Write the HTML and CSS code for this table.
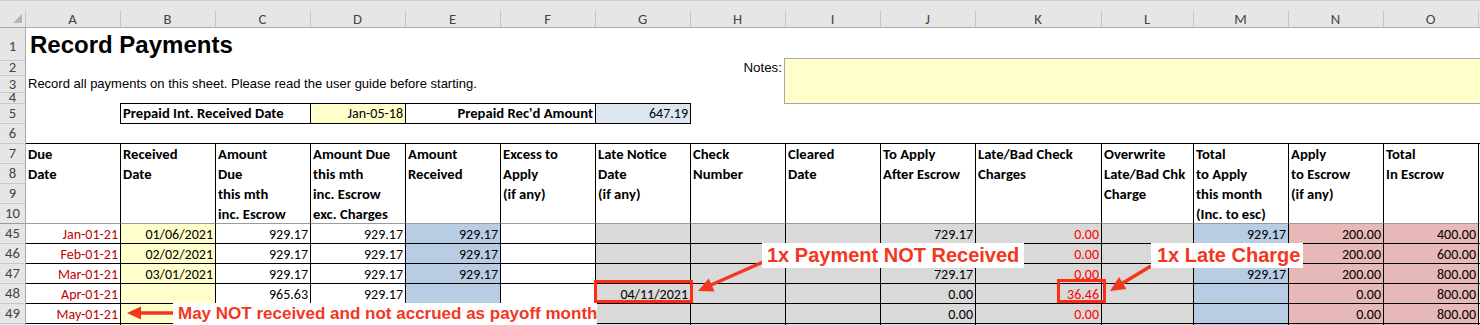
FILE: index.html
```html
<!DOCTYPE html>
<html>
<head>
<meta charset="utf-8">
<title>Record Payments</title>
<link rel="stylesheet" href="styles.css">
</head>
<body>
<div class="sheet">
  <div class="colhead">
    <div class="corner"><span class="tri"></span></div>
    <div class="cl">A</div><div class="cl">B</div><div class="cl">C</div><div class="cl">D</div><div class="cl">E</div>
    <div class="cl">F</div><div class="cl">G</div><div class="cl">H</div><div class="cl">I</div><div class="cl">J</div>
    <div class="cl">K</div><div class="cl">L</div><div class="cl">M</div><div class="cl">N</div><div class="cl">O</div>
    <div class="cl cl-end"></div>
  </div>
  <div class="main">
    <div class="rowheads">
      <div class="rh rh-first rh1">1</div>
      <div class="rh rh2">2</div>
      <div class="rh rh3">3</div>
      <div class="rh rh4">4</div>
      <div class="rh">5</div>
      <div class="rh">6</div>
      <div class="rh">7</div>
      <div class="rh">8</div>
      <div class="rh">9</div>
      <div class="rh">10</div>
      <div class="rh rh-freeze">45</div>
      <div class="rh">46</div>
      <div class="rh">47</div>
      <div class="rh">48</div>
      <div class="rh">49</div>
      <div class="rh">50</div>
    </div>
    <div class="cells">
      <div class="top">
        <div class="title">Record Payments</div>
        <div class="notes-lbl">Notes:</div>
        <div class="notes"></div>
        <div class="desc">Record all payments on this sheet. Please read the user guide before starting.</div>
        <div class="pp pp-lbl">Prepaid Int. Received Date</div>
        <div class="pp pp-date">Jan-05-18</div>
        <div class="pp pp-alb">Prepaid Rec'd Amount</div>
        <div class="pp pp-amt">647.19</div>
      </div>
      <div class="thead">
        <div class="th th-a">Due<br>Date</div>
        <div class="th">Received<br>Date</div>
        <div class="th">Amount<br>Due<br>this mth<br>inc. Escrow</div>
        <div class="th">Amount Due<br>this mth<br>inc. Escrow<br>exc. Charges</div>
        <div class="th">Amount<br>Received</div>
        <div class="th">Excess to<br>Apply<br>(if any)</div>
        <div class="th">Late Notice<br>Date<br>(if any)</div>
        <div class="th">Check<br>Number</div>
        <div class="th">Cleared<br>Date</div>
        <div class="th">To Apply<br>After Escrow</div>
        <div class="th">Late/Bad Check<br>Charges</div>
        <div class="th">Overwrite<br>Late/Bad Chk<br>Charge</div>
        <div class="th">Total<br>to Apply<br>this month<br>(Inc. to esc)</div>
        <div class="th">Apply<br>to Escrow<br>(if any)</div>
        <div class="th">Total<br>In Escrow</div>
        <div class="th th-end"></div>
      </div>

      <div class="row row-freeze">
        <div class="td td-a dr">Jan-01-21</div><div class="td y">01/06/2021</div><div class="td">929.17</div><div class="td">929.17</div><div class="td b">929.17</div><div class="td"></div>
        <div class="td g"></div><div class="td g"></div><div class="td g"></div><div class="td g">729.17</div><div class="td g br">0.00</div><div class="td g"></div>
        <div class="td b">929.17</div><div class="td p">200.00</div><div class="td p">400.00</div><div class="td td-end"></div>
      </div>
      <div class="row">
        <div class="td td-a dr">Feb-01-21</div><div class="td y">02/02/2021</div><div class="td">929.17</div><div class="td">929.17</div><div class="td b">929.17</div><div class="td"></div>
        <div class="td g"></div><div class="td g"></div><div class="td g"></div><div class="td g"></div><div class="td g br">0.00</div><div class="td g"></div>
        <div class="td b"></div><div class="td p">200.00</div><div class="td p">600.00</div><div class="td td-end"></div>
      </div>
      <div class="row">
        <div class="td td-a dr">Mar-01-21</div><div class="td y">03/01/2021</div><div class="td">929.17</div><div class="td">929.17</div><div class="td b">929.17</div><div class="td"></div>
        <div class="td g"></div><div class="td g"></div><div class="td g"></div><div class="td g">729.17</div><div class="td g br">0.00</div><div class="td g"></div>
        <div class="td b">929.17</div><div class="td p">200.00</div><div class="td p">800.00</div><div class="td td-end"></div>
      </div>
      <div class="row">
        <div class="td td-a dr">Apr-01-21</div><div class="td y"></div><div class="td">965.63</div><div class="td">929.17</div><div class="td b"></div><div class="td"></div>
        <div class="td g">04/11/2021</div><div class="td g"></div><div class="td g"></div><div class="td g">0.00</div><div class="td g br">36.46</div><div class="td g"></div>
        <div class="td b"></div><div class="td p">0.00</div><div class="td p">800.00</div><div class="td td-end"></div>
      </div>
      <div class="row">
        <div class="td td-a dr">May-01-21</div><div class="td y"></div><div class="td"></div><div class="td"></div><div class="td b"></div><div class="td"></div>
        <div class="td g"></div><div class="td g"></div><div class="td g"></div><div class="td g">0.00</div><div class="td g br">0.00</div><div class="td g"></div>
        <div class="td b"></div><div class="td p">0.00</div><div class="td p">800.00</div><div class="td td-end"></div>
      </div>
      <div class="row">
        <div class="td td-a"></div><div class="td y"></div><div class="td"></div><div class="td"></div><div class="td b"></div><div class="td"></div>
        <div class="td g"></div><div class="td g"></div><div class="td g"></div><div class="td g"></div><div class="td g"></div><div class="td g"></div>
        <div class="td b"></div><div class="td p"></div><div class="td p"></div><div class="td td-end"></div>
      </div>
    </div>
  </div>

  <svg class="arrows" width="1480" height="325" viewBox="0 0 1480 325">
    <line x1="173" y1="313" x2="139" y2="313" class="shaft"/>
    <polygon points="127,313 141,306.5 141,319.5" class="head"/>
    <line x1="763" y1="262" x2="711" y2="285" class="shaft"/>
    <polygon points="698,291 714.5,291.5 708.8,278.4" class="head"/>
    <line x1="1151" y1="266" x2="1122" y2="283.5" class="shaft"/>
    <polygon points="1110,291 1126.4,289 1119,277" class="head"/>
  </svg>
  <div class="mark mark-g"></div>
  <div class="mark mark-k"></div>
  <div class="callout callout-pay">1x Payment NOT Received</div>
  <div class="callout callout-late">1x Late Charge</div>
  <div class="callout callout-may">May NOT received and not accrued as payoff month</div>
</div>
</body>
</html>
```

FILE: styles.css
```css
:root {
  --cal: "Carlito", "Calibri", "Lato", sans-serif;
  --ari: "Liberation Sans", Arial, sans-serif;
  --cols-head: 25px repeat(10, 95px) 126px 92px 95px 95px 95px 2px;
  --cols: 94px repeat(9, 95px) 126px 92px 95px 95px 95px 2px;
  --red: #f4361f;
}

* { box-sizing: border-box; margin: 0; padding: 0; }

html, body {
  width: 1480px;
  height: 325px;
  overflow: hidden;
  background: #fff;
}

body {
  font-family: var(--cal);
  font-size: 14px;
  color: #000;
}

.sheet {
  position: relative;
  width: 1480px;
  height: 325px;
  overflow: hidden;
  display: flex;
  flex-direction: column;
}

/* column letters */
.colhead {
  display: grid;
  grid-template-columns: var(--cols-head);
  height: 28px;
  flex: none;
  background: #e6e6e6;
  border-top: 1px solid #d0d0d0;
  border-bottom: 1px solid #ababab;
}

.corner {
  display: flex;
  justify-content: flex-end;
  align-items: flex-end;
  padding: 0 3px 4px 0;
}

.tri {
  width: 0;
  height: 0;
  border-left: 9px solid transparent;
  border-bottom: 9px solid #b4b4b4;
}

.cl {
  display: flex;
  align-items: flex-end;
  justify-content: center;
  line-height: 16px;
  font-size: 14.67px;
  color: #444;
  background: linear-gradient(#c4c4c4, #c4c4c4) left bottom / 1px 16px no-repeat;
}

/* body */
.main {
  display: flex;
  flex: 1;
}

.rowheads {
  width: 26px;
  flex: none;
  background: #e6e6e6;
  border-right: 1px solid #ababab;
  display: flex;
  flex-direction: column;
}

.rh {
  height: 20px;
  flex: none;
  border-top: 1px solid #c8c8c8;
  text-align: center;
  font-size: 14.67px;
  line-height: 19px;
  color: #444;
  overflow: hidden;
}

.rh-first { border-top: 0; }
.rh1 { height: 32px; line-height: 36px; }
.rh2 { height: 15px; line-height: 13px; overflow: visible; }
.rh3 { height: 17px; line-height: 16px; overflow: visible; }
.rh4 { height: 11px; line-height: 9px; }
.rh-freeze { border-top-color: #9a9a9a; }

.cells {
  display: flex;
  flex-direction: column;
  flex: 1;
}

.top {
  display: grid;
  grid-template-columns: var(--cols);
  grid-template-rows: 32px 15px 17px 11px 20px 20px;
}

.title {
  grid-column: 1 / span 6;
  grid-row: 1;
  font-family: var(--ari);
  font-weight: bold;
  font-size: 24px;
  line-height: 32px;
  padding-left: 4px;
  padding-top: 1px;
  white-space: nowrap;
}

.notes-lbl {
  grid-column: 8;
  grid-row: 2;
  font-family: var(--ari);
  font-size: 13.33px;
  line-height: 15px;
  text-align: right;
  padding-right: 3px;
}

.notes {
  grid-column: 9 / span 8;
  grid-row: 2 / span 3;
  background: #ffffcc;
  border: 1px solid #a8a8a8;
  border-right: 0;
  margin: -2px 0 -1px -1px;
}

.desc {
  grid-column: 1 / span 8;
  grid-row: 3;
  font-family: var(--ari);
  font-size: 13px;
  line-height: 18px;
  padding-left: 2px;
  white-space: nowrap;
}

.pp {
  grid-row: 5;
  border: 1px solid #000;
  border-right: 0;
  margin-bottom: -1px;
  line-height: 19px;
  white-space: nowrap;
  font-size: 14.67px;
}

.pp-lbl {
  grid-column: 2 / span 2;
  font-weight: bold;
  padding-left: 2px;
}

.pp-date {
  grid-column: 4;
  background: #ffffcc;
  text-align: right;
  padding-right: 2px;
  font-size: 14px;
}

.pp-alb {
  grid-column: 5 / span 2;
  font-weight: bold;
  text-align: right;
  padding-right: 2px;
}

.pp-amt {
  grid-column: 7;
  background: #dce6f1;
  text-align: right;
  padding-right: 2px;
  border-right: 1px solid #000;
  margin-right: -1px;
  font-size: 14px;
}

/* table header */
.thead {
  display: grid;
  grid-template-columns: var(--cols);
  height: 80px;
  flex: none;
}

.th {
  border-top: 1px solid #000;
  border-left: 1px solid #000;
  font-weight: bold;
  font-size: 14.67px;
  line-height: 20px;
  padding-left: 2px;
  white-space: nowrap;
  overflow: hidden;
}

.th-a { border-left: 0; }

/* data rows */
.row {
  display: grid;
  grid-template-columns: var(--cols);
  height: 20px;
  flex: none;
}

.td {
  border-top: 1px solid #000;
  border-left: 1px solid #000;
  text-align: right;
  padding: 2px 2px 0 0;
  line-height: 17px;
  white-space: nowrap;
  overflow: hidden;
}

.td-a { border-left: 0; }
.row-freeze .td { border-top-color: #9a9a9a; }

.y { background: #ffffcc; }
.b { background: #b8cce4; }
.g { background: #d9d9d9; }
.p { background: #e6b8b7; }
.dr { color: #c00000; }
.br { color: #ff0000; }

/* annotations */
.arrows {
  position: absolute;
  left: 0;
  top: 0;
  pointer-events: none;
}

.shaft {
  stroke: var(--red);
  stroke-width: 3.5;
}

.head { fill: var(--red); }

.mark {
  position: absolute;
  border: 3px solid #ff2b12;
}

.mark-g { left: 594px; top: 280px; width: 99px; height: 23px; }
.mark-k { left: 1057px; top: 279px; width: 49px; height: 24px; }

.callout {
  position: absolute;
  background: #fff;
  color: var(--red);
  font-family: var(--ari);
  font-weight: bold;
  white-space: nowrap;
}

.callout-pay {
  left: 762px;
  top: 243px;
  width: 262px;
  height: 25px;
  font-size: 20px;
  line-height: 25px;
  padding-left: 5px;
}

.callout-late {
  left: 1151px;
  top: 243px;
  width: 152px;
  height: 25px;
  font-size: 20px;
  line-height: 25px;
  padding-left: 6px;
}

.callout-may {
  left: 173px;
  top: 303px;
  width: 424px;
  height: 24px;
  font-size: 17px;
  line-height: 21px;
  padding-left: 5px;
}
```
